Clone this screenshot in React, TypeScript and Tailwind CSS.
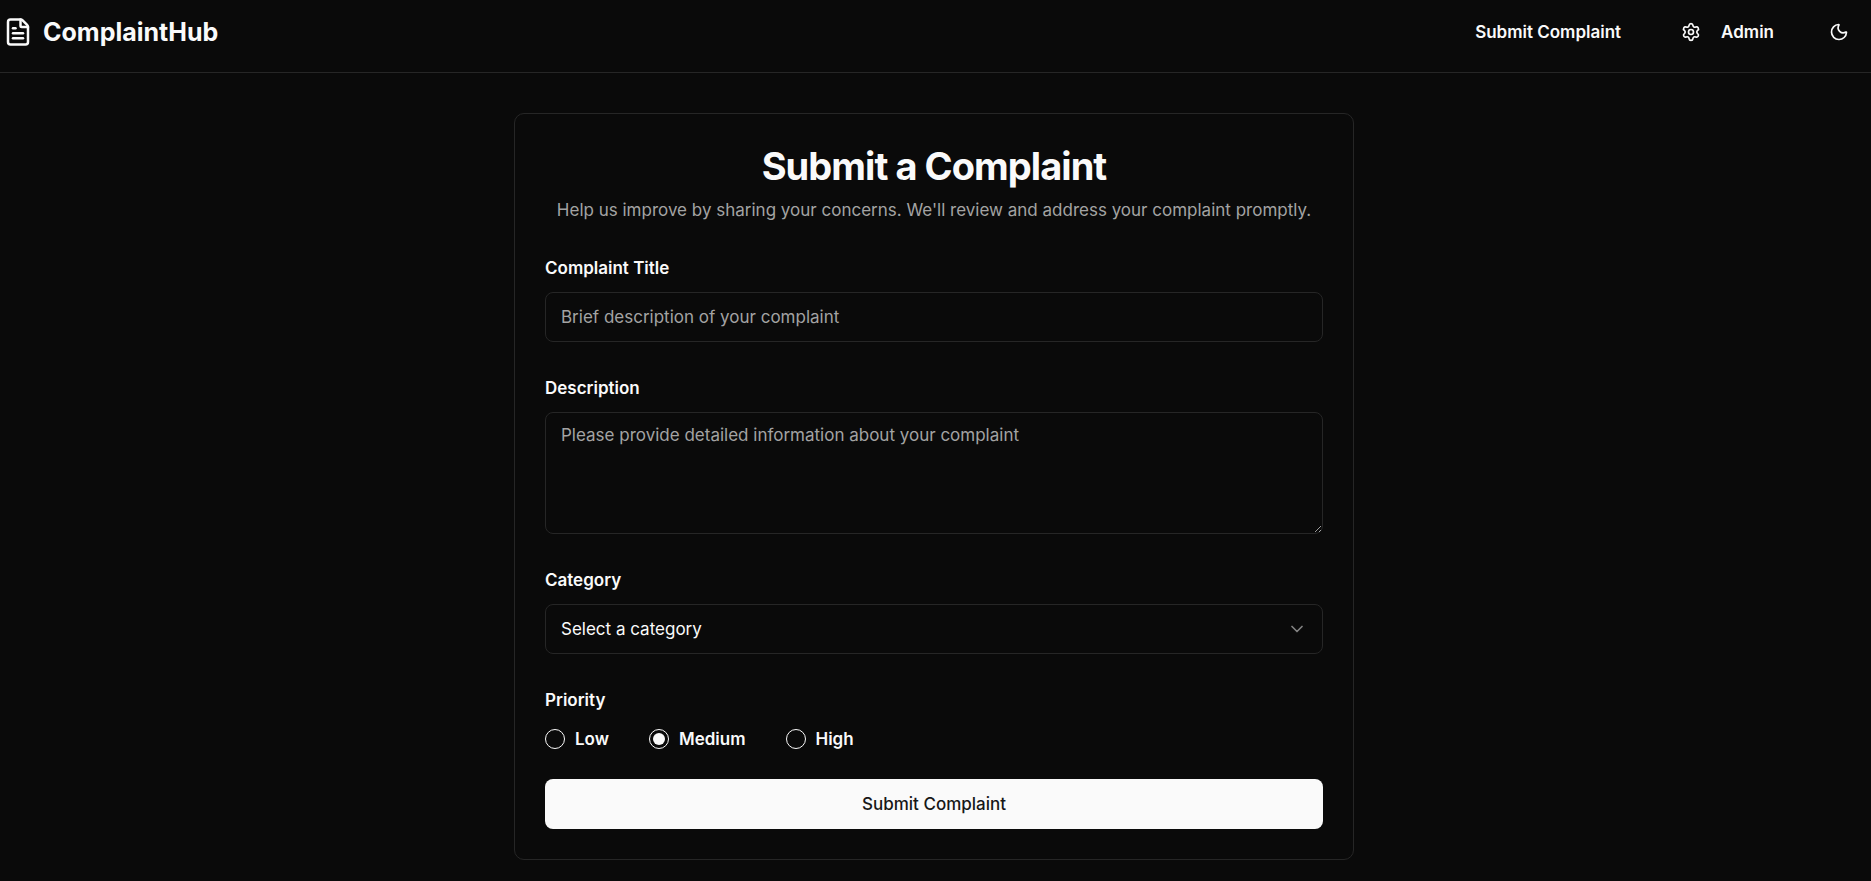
import { ChevronDown, FileText, Moon, Settings } from 'lucide-react';

const priorities = ['Low', 'Medium', 'High'];

const labelClass = 'text-[17px] leading-[18px] font-semibold';
const fieldClass =
  'w-full rounded-lg border border-[#262626] bg-[#0a0a0a] px-[15px] text-[17px] leading-[25px] placeholder:text-[#a3a3a3] outline-none';

function Header() {
  return (
    <header className="border-b border-[#262626] h-[73px] pb-2 pl-[3px] pr-[22px] flex items-center justify-between">
      <a href="#" className="flex items-center gap-[10px]">
        <FileText className="size-[30px]" />
        <span className="text-[25px] leading-[35px] font-bold">ComplaintHub</span>
      </a>
      <nav className="flex items-center text-[17px] leading-[25px] font-semibold">
        <a href="#submit">Submit Complaint</a>
        <a href="#admin" className="ml-[60px] flex items-center gap-5">
          <Settings className="size-5" />
          Admin
        </a>
        <button type="button" aria-label="Toggle theme" className="ml-[55px]">
          <Moon className="size-5" />
        </button>
      </nav>
    </header>
  );
}

function ComplaintForm() {
  return (
    <form id="submit" className="flex flex-col">
      <label htmlFor="title" className={labelClass}>
        Complaint Title
      </label>
      <input
        id="title"
        type="text"
        placeholder="Brief description of your complaint"
        className={`${fieldClass} mt-[15px] h-[50px]`}
      />

      <label htmlFor="description" className={`${labelClass} mt-[37px]`}>
        Description
      </label>
      <textarea
        id="description"
        placeholder="Please provide detailed information about your complaint"
        className={`${fieldClass} mt-[15px] h-[122px] py-[10px] resize-y`}
      />

      <label htmlFor="category" className={`${labelClass} mt-[37px]`}>
        Category
      </label>
      <div className="relative mt-[15px]">
        <select id="category" defaultValue="" className={`${fieldClass} h-[50px] appearance-none`}>
          <option value="">Select a category</option>
          <option value="service">Service</option>
          <option value="product">Product</option>
          <option value="other">Other</option>
        </select>
        <ChevronDown className="absolute right-4 top-[15px] size-5 opacity-50 pointer-events-none" />
      </div>

      <fieldset className="mt-[37px]">
        <legend className={labelClass}>Priority</legend>
        <div className="mt-5 flex gap-10">
          {priorities.map((name) => (
            <label key={name} className={`${labelClass} flex items-center gap-[10px]`}>
              <input
                type="radio"
                name="priority"
                value={name}
                defaultChecked={name === 'Medium'}
                className="size-5 appearance-none rounded-full border border-[#fafafa] p-[3px] bg-clip-content checked:bg-[#fafafa]"
              />
              {name}
            </label>
          ))}
        </div>
      </fieldset>

      <button
        type="submit"
        className="mt-[30px] h-[50px] rounded-lg bg-[#fafafa] text-[17px] leading-[25px] font-medium text-[#171717]"
      >
        Submit Complaint
      </button>
    </form>
  );
}

export default function App() {
  return (
    <div className="min-h-screen bg-[#0a0a0a] text-[#fafafa] font-['Inter',sans-serif]">
      <Header />
      <main className="pt-10 pb-5 pr-[3px]">
        <section className="mx-auto max-w-[840px] rounded-[10px] border border-[#262626] p-[30px]">
          <div className="mb-9 text-center">
            <h1 className="text-[38px] leading-[45px] font-bold tracking-tight">Submit a Complaint</h1>
            <p className="mt-[9px] text-[17px] leading-[25px] text-[#a3a3a3]">
              Help us improve by sharing your concerns. We'll review and address your complaint promptly.
            </p>
          </div>
          <ComplaintForm />
        </section>
      </main>
    </div>
  );
}
